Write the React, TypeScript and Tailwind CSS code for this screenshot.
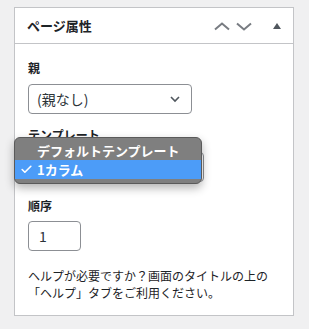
import { Check } from "lucide-react";

const font = { fontFamily: '"Noto Sans CJK JP", "Noto Sans", sans-serif' };

function Chevron({ up = false }: { up?: boolean }) {
  return (
    <svg width="20" height="20" viewBox="0 0 20 20" className="text-[#787c82]">
      <path
        d={up ? "M3 13.5 L10 7.5 L17 13.5" : "M3 7.5 L10 13.5 L17 7.5"}
        fill="none"
        stroke="currentColor"
        strokeWidth="2"
      />
    </svg>
  );
}

export default function App() {
  return (
    <div className="w-[309px] h-[329px] bg-[#f0f0f1] pt-[7px] pl-[14px]" style={font}>
      <div className="relative w-[280px] h-[309px] bg-white border border-[#c3c4c7]">
        {/* Header */}
        <div className="h-[36px] border-b border-[#c3c4c7] flex items-center pl-[12px]">
          <h2 className="text-[13px] font-semibold text-[#1d2327] flex-1">ページ属性</h2>
          <div className="flex items-center">
            <Chevron up />
            <span className="w-[2px]" />
            <Chevron />
            <span className="w-[7px]" />
            <div className="w-[32px] flex justify-center">
              <svg width="10" height="8" viewBox="0 0 10 8">
                <path d="M1 7 L5 1 L9 7 Z" fill="#50575e" />
              </svg>
            </div>
          </div>
        </div>

        {/* Body */}
        <div className="px-[13px] pt-[15px] text-[#1d2327]">
          <p className="text-[12px] font-semibold leading-[18px]">親</p>
          <div className="mt-[7px] w-[164px] h-[30px] border border-[#8c8f94] rounded-[4px] flex items-center justify-between pl-[8px] pr-[8px]">
            <span className="text-[14px] text-[#2c3338]">(親なし)</span>
            <svg width="16" height="16" viewBox="0 0 16 16">
              <path d="M4 6 L8 10 L12 6" fill="none" stroke="#50575e" strokeWidth="1.6" />
            </svg>
          </div>

          <p className="mt-[12px] text-[12px] font-semibold leading-[18px]">テンプレート</p>
          <div className="mt-[8px] w-[176px] h-[30px] border border-[#8c8f94] rounded-[4px]" />

          <p className="mt-[15px] text-[12px] font-semibold leading-[18px]">順序</p>
          <div className="mt-[6px] w-[53px] h-[30px] border border-[#8c8f94] rounded-[4px] flex items-center pl-[10px]">
            <span className="text-[14px] text-[#2c3338]">1</span>
          </div>

          <p className="mt-[16px] text-[12px] leading-[17px] text-[#1d2327]">
            ヘルプが必要ですか？画面のタイトルの上の
            <br />
            「ヘルプ」タブをご利用ください。
          </p>
        </div>

        {/* Native select popup */}
        <div className="absolute left-[-1px] top-[129px] w-[188px] h-[47px] rounded-[6px] bg-[#7f7f7f] border border-[#5a5a5a] shadow-[0_4px_10px_rgba(0,0,0,0.3)] pt-[3px] text-white text-[13px] font-bold">
          <div className="h-[19px] flex items-center pl-[22px] leading-none">デフォルトテンプレート</div>
          <div className="h-[19px] bg-[#4c9cf8] flex items-center leading-none">
            <span className="w-[22px] flex justify-center">
              <Check size={13} strokeWidth={3} />
            </span>
            1カラム
          </div>
        </div>
      </div>
    </div>
  );
}
